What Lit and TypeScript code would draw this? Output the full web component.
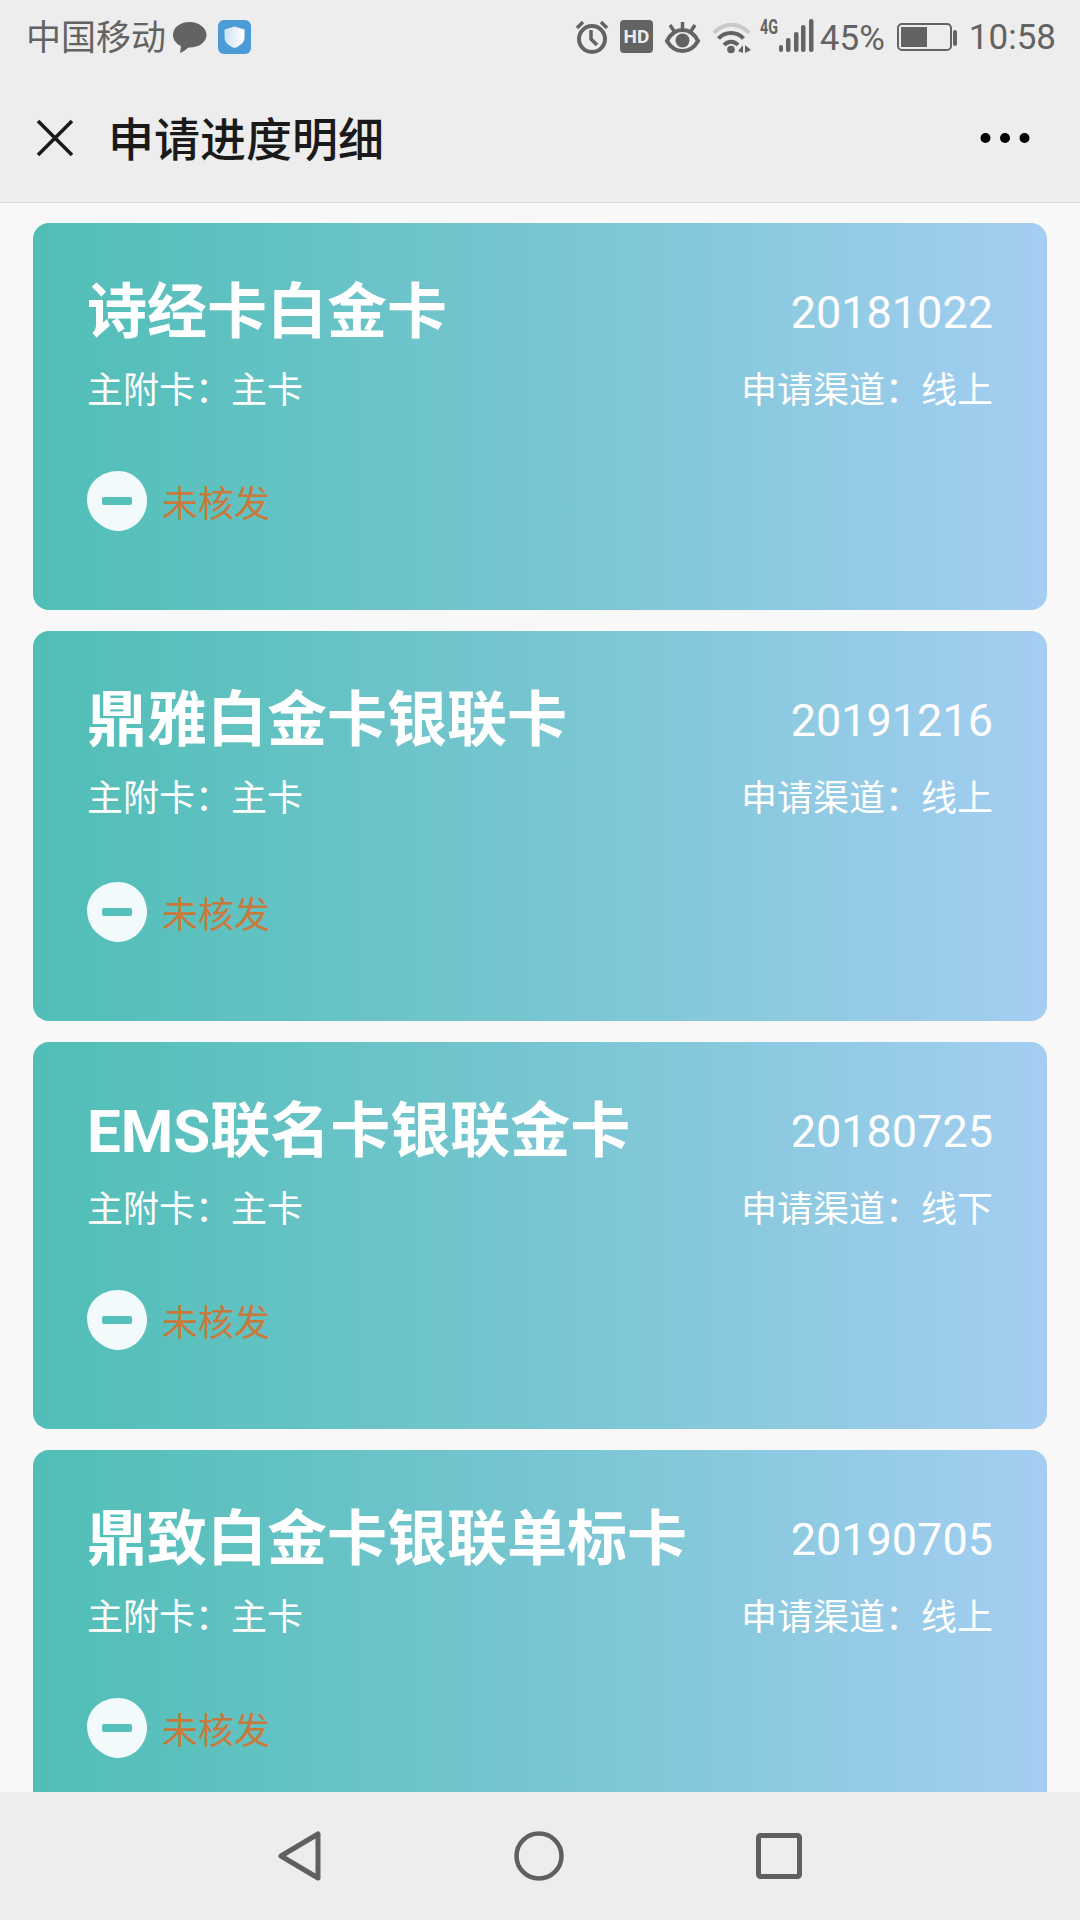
import { css, html, LitElement, svg, TemplateResult } from "lit";
import { customElement } from "lit/decorators.js";

interface Card {
    name: string;
    date: string;
    channel: string;
    height: number;
}

const CARDS: Card[] = [
    { name: "诗经卡白金卡", date: "20181022", channel: "线上", height: 387 },
    { name: "鼎雅白金卡银联卡", date: "20191216", channel: "线上", height: 390 },
    { name: "EMS联名卡银联金卡", date: "20180725", channel: "线下", height: 387 },
    { name: "鼎致白金卡银联单标卡", date: "20190705", channel: "线上", height: 387 },
];

const icon = (w: number, h: number, body: TemplateResult) => html`
    <svg width=${w} height=${h} viewBox="0 0 ${w} ${h}">${body}</svg>
`;

@customElement("app-root")
export class AppRoot extends LitElement {
    private renderStatusBar(): TemplateResult {
        return html`
            <div class="status">
                <div class="status-left">
                    <span class="carrier">中国移动</span>
                    <span class="bubble">
                        ${icon(35, 33, svg`<path d="M17.500 1C8 1 1 6.500 1 14c0 5 3.500 9 8 11l-1 7c3-1 6-3.500 8.500-5.500h1C27 26.500 34.500 21 34.500 14S27 1 17.500 1z" fill="#636363"/>`)}
                    </span>
                    ${icon(33, 34, svg`
                        <defs><linearGradient id="sh" x1="0" x2="1" y1="0" y2="0"><stop offset="0" stop-color="#cfe3f3"/><stop offset="1" stop-color="#ffffff"/></linearGradient></defs>
                        <rect width="33" height="34" rx="6" fill="#4a9bd6"/>
                        <path d="M16.500 6.500l10 3v8c0 5-4.500 8.500-10 10.500-5.500-2-10-5.500-10-10.500v-8z" fill="url(#sh)"/>
                    `)}
                </div>
                <div class="status-right">
                    ${icon(32, 34, svg`
                        <circle cx="16" cy="19" r="13" fill="none" stroke="#636363" stroke-width="4"/>
                        <path d="M15 10v9l6 6" fill="none" stroke="#636363" stroke-width="3.500"/>
                        <path d="M1 8l6-6M31 8l-6-6" stroke="#636363" stroke-width="3.500"/>
                    `)}
                    ${icon(33, 34, svg`
                        <rect width="33" height="33" rx="4" fill="#636363"/>
                        <text x="16.500" y="23" text-anchor="middle" class="hd">HD</text>
                    `)}
                    ${icon(35, 32, svg`
                        <path d="M2 20c4-8 10-11 15.500-11S29 12 33 20c-4 7-10 10-15.500 10S6 27 2 20z" fill="none" stroke="#636363" stroke-width="4"/>
                        <circle cx="17.500" cy="19.500" r="7" fill="#636363"/>
                        <path d="M17.500 1v7M5 4l4 6M30 4l-4 6" stroke="#636363" stroke-width="3.500"/>
                    `)}
                    ${icon(39, 33, svg`
                        <path d="M2 12C12 1 27 1 37 12" fill="none" stroke="#c9c9c9" stroke-width="4"/>
                        <path d="M6.500 17.500C13 10 25 10 31.500 17.500M12 24c4-4.500 10-4.500 14 0" fill="none" stroke="#636363" stroke-width="4"/>
                        <circle cx="19" cy="28.500" r="3.800" fill="#636363"/>
                        <path d="M26 30l5-6v8zM33 24l6 5-6 3z" fill="#636363"/>
                    `)}
                    <span class="net">
                        ${icon(54, 34, svg`
                            <text x="0" y="14.500" class="net-label" textLength="18" lengthAdjust="spacingAndGlyphs">4G</text>
                            <rect x="19" y="26" width="4" height="7" rx="2" fill="#636363"/>
                            <rect x="26" y="19" width="4.500" height="14" rx="2" fill="#636363"/>
                            <rect x="34" y="13" width="4.500" height="20" rx="2" fill="#636363"/>
                            <rect x="41" y="6" width="4.500" height="27" rx="2" fill="#636363"/>
                            <rect x="49" y="0" width="4.500" height="33" rx="2" fill="#636363"/>
                        `)}
                    </span>
                    <span class="percent">45%</span>
                    ${icon(60, 28, svg`
                        <rect x="1" y="1" width="53" height="26" rx="4" fill="none" stroke="#636363" stroke-width="2"/>
                        <rect x="4" y="4" width="26" height="20" fill="#636363"/>
                        <rect x="56" y="7" width="4" height="16" rx="2" fill="#636363"/>
                    `)}
                    <span class="time">10:58</span>
                </div>
            </div>
        `;
    }

    private renderHeader(): TemplateResult {
        return html`
            <div class="header">
                ${icon(38, 38, svg`<path d="M2 2l34 34M36 2L2 36" stroke="#1a1a1a" stroke-width="3.600" fill="none"/>`)}
                <span class="title">申请进度明细</span>
                <span class="spacer"></span>
                ${icon(50, 12, svg`
                    <circle cx="5.500" cy="6" r="5" fill="#000"/>
                    <circle cx="25" cy="6" r="5" fill="#000"/>
                    <circle cx="44.500" cy="6" r="5" fill="#000"/>
                `)}
            </div>
        `;
    }

    private renderCard(card: Card): TemplateResult {
        return html`
            <section class="card" style="height:${card.height}px">
                <div class="row name-row">
                    <span class="name">${card.name}</span>
                    <span class="date">${card.date}</span>
                </div>
                <div class="row sub-row">
                    <span>主附卡：主卡</span>
                    <span>申请渠道：${card.channel}</span>
                </div>
                <div class="state">
                    ${icon(60, 60, svg`
                        <path d="M31 0C47 0 60 13 60 30 60 46 47 60 31 60 22 60 12 54 6 47 2 41 0 35 0 28 0 12 14 0 31 0z" fill="#f3fafb"/>
                        <rect x="15" y="26" width="30" height="8" rx="2" fill="#55bfb9"/>
                    `)}
                    <span class="state-text">未核发</span>
                </div>
            </section>
        `;
    }

    private renderNav(): TemplateResult {
        return html`
            <div class="nav">
                ${icon(44, 50, svg`<path d="M3 25L40 3v44z" fill="none" stroke="#5f5f5f" stroke-width="5" stroke-linejoin="round"/>`)}
                ${icon(50, 50, svg`<circle cx="25" cy="25" r="22.500" fill="none" stroke="#5f5f5f" stroke-width="4.500"/>`)}
                ${icon(46, 46, svg`<rect x="2.500" y="2.500" width="41" height="41" rx="2" fill="none" stroke="#5f5f5f" stroke-width="5"/>`)}
            </div>
        `;
    }

    render(): TemplateResult {
        return html`
            <div class="page">
                ${this.renderStatusBar()}
                ${this.renderHeader()}
                <main class="list">${CARDS.map((c) => this.renderCard(c))}</main>
                ${this.renderNav()}
            </div>
        `;
    }

    static styles = css`
        :host {
            display: block;
            font-family: Roboto, "Noto Sans CJK SC", sans-serif;
        }
        svg {
            display: block;
            flex: none;
            overflow: visible;
        }
        .page {
            width: 1080px;
            height: 1920px;
            display: flex;
            flex-direction: column;
            background: #f8f8f8;
            overflow: hidden;
        }
        .status {
            height: 74px;
            flex: none;
            background: #ededed;
            display: flex;
            align-items: center;
            justify-content: space-between;
            padding: 0 24px 0 26px;
            color: #636363;
        }
        .status-left,
        .status-right {
            display: flex;
            align-items: center;
        }
        .status-left {
            gap: 6px;
        }
        .status-right {
            gap: 12px;
        }
        .carrier {
            font-size: 35px;
            line-height: 40px;
            padding-top: 4px;
        }
        .bubble {
            margin-right: 5px;
        }
        .hd {
            font: bold 19px Roboto, sans-serif;
            fill: #ededed;
        }
        .net {
            margin: 0 0 2px -3px;
        }
        .net-label {
            font: bold 20px Roboto, sans-serif;
            fill: #636363;
        }
        .percent {
            font-size: 35px;
            line-height: 40px;
            margin-left: -6px;
            padding-top: 4px;
        }
        .time {
            font-size: 35px;
            line-height: 40px;
            padding-top: 2px;
        }
        .header {
            height: 129px;
            flex: none;
            box-sizing: border-box;
            background: #ededed;
            border-bottom: 1px solid #d9d9d9;
            display: flex;
            align-items: center;
            padding: 0 50px 0 36px;
            color: #1a1a1a;
        }
        .title {
            font-size: 46px;
            font-weight: 500;
            margin-left: 34px;
            padding-bottom: 4px;
        }
        .spacer {
            flex: 1;
        }
        .list {
            flex: 1;
            min-height: 0;
            overflow: hidden;
            padding: 20px 33px 0;
            display: flex;
            flex-direction: column;
            gap: 21px;
        }
        .card {
            flex: none;
            box-sizing: border-box;
            padding: 48px 54px 79px;
            border-radius: 16px;
            background: linear-gradient(90deg, #50beb6, #77c6d1 50%, #a5cef2);
            color: #fff;
            display: flex;
            flex-direction: column;
        }
        .row {
            display: flex;
            justify-content: space-between;
            align-items: center;
        }
        .name-row {
            height: 80px;
        }
        .name {
            font-size: 60px;
            font-weight: 700;
            padding-bottom: 10px;
        }
        .date {
            font-size: 45px;
            padding-top: 2px;
        }
        .sub-row {
            height: 40px;
            margin-top: 16px;
            font-size: 36px;
        }
        .state {
            display: flex;
            align-items: center;
            gap: 15px;
            margin-top: auto;
        }
        .state-text {
            font-size: 36px;
            color: #c9793c;
        }
        .nav {
            height: 128px;
            flex: none;
            background: #ededed;
            display: flex;
            align-items: center;
            padding: 0 278px;
            justify-content: space-between;
            box-sizing: border-box;
        }
    `;
}
